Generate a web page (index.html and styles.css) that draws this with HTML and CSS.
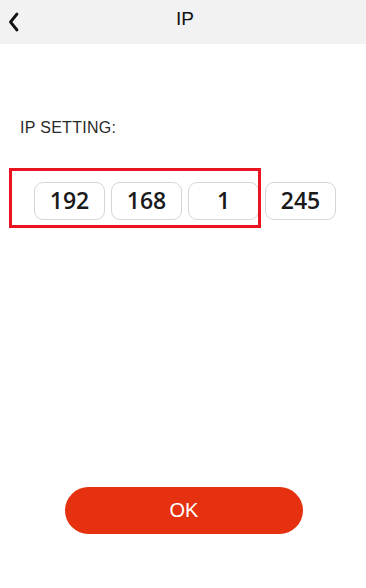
FILE: index.html
```html
<!DOCTYPE html>
<html>
<head>
<meta charset="utf-8">
<link rel="stylesheet" href="styles.css">
</head>
<body>
<div class="screen">
  <header class="topbar">
    <span class="back">
      <svg width="12" height="20" viewBox="0 0 12 20"><polyline points="9,2 2.5,10 9,18" fill="none" stroke="#111" stroke-width="2.8" stroke-linecap="round" stroke-linejoin="round"/></svg>
    </span>
    <h1 class="title">IP</h1>
  </header>
  <main class="content">
    <div class="label">IP SETTING:</div>
    <div class="ip-wrap">
      <div class="ip-row">
        <div class="octet">192</div>
        <div class="octet">168</div>
        <div class="octet">1</div>
        <div class="octet">245</div>
      </div>
      <div class="highlight"></div>
    </div>
  </main>
  <div class="footer">
    <button class="ok">OK</button>
  </div>
</div>
</body>
</html>
```
FILE: styles.css
```css
html, body {
  margin: 0;
  padding: 0;
  background: #fff;
}
.screen {
  width: 366px;
  height: 588px;
  display: flex;
  flex-direction: column;
  font-family: "Liberation Sans", Arial, sans-serif;
}
.topbar {
  height: 44px;
  background: #f2f2f2;
  position: relative;
  display: flex;
  align-items: center;
  justify-content: center;
}
.back {
  position: absolute;
  left: 8px;
  top: 12px;
  display: block;
  line-height: 0;
}
.title {
  margin: 0;
  font-size: 19px;
  font-weight: normal;
  color: #111;
  padding-left: 4px;
  padding-bottom: 6px;
}
.content {
  flex: 1;
  padding-top: 74px;
}
.label {
  padding-left: 20px;
  font-size: 16px;
  line-height: 20px;
  color: #2a2a2a;
  letter-spacing: 0.3px;
}
.ip-wrap {
  position: relative;
  margin-top: 44px;
}
.ip-row {
  display: flex;
  gap: 6px;
  padding-left: 34px;
}
.octet {
  width: 69px;
  height: 34px;
  border: 1px solid #d6d6d6;
  border-radius: 9px;
  display: flex;
  align-items: center;
  justify-content: center;
  font-family: "Open Sans", "Noto Sans", sans-serif;
  font-size: 23px;
  font-weight: 600;
  color: #1a1a1a;
  padding-bottom: 2px;
  box-sizing: content-box;
}
.highlight {
  position: absolute;
  left: 9px;
  top: -14px;
  width: 246px;
  height: 54px;
  border: 3px solid #e8141f;
}
.footer {
  padding-bottom: 54px;
  display: flex;
  justify-content: center;
}
.ok {
  width: 238px;
  height: 47px;
  border: none;
  border-radius: 24px;
  background: #e5310f;
  color: #fff;
  font-family: "Liberation Sans", Arial, sans-serif;
  font-size: 20px;
  margin-left: 2px;
  padding: 0;
}
```
